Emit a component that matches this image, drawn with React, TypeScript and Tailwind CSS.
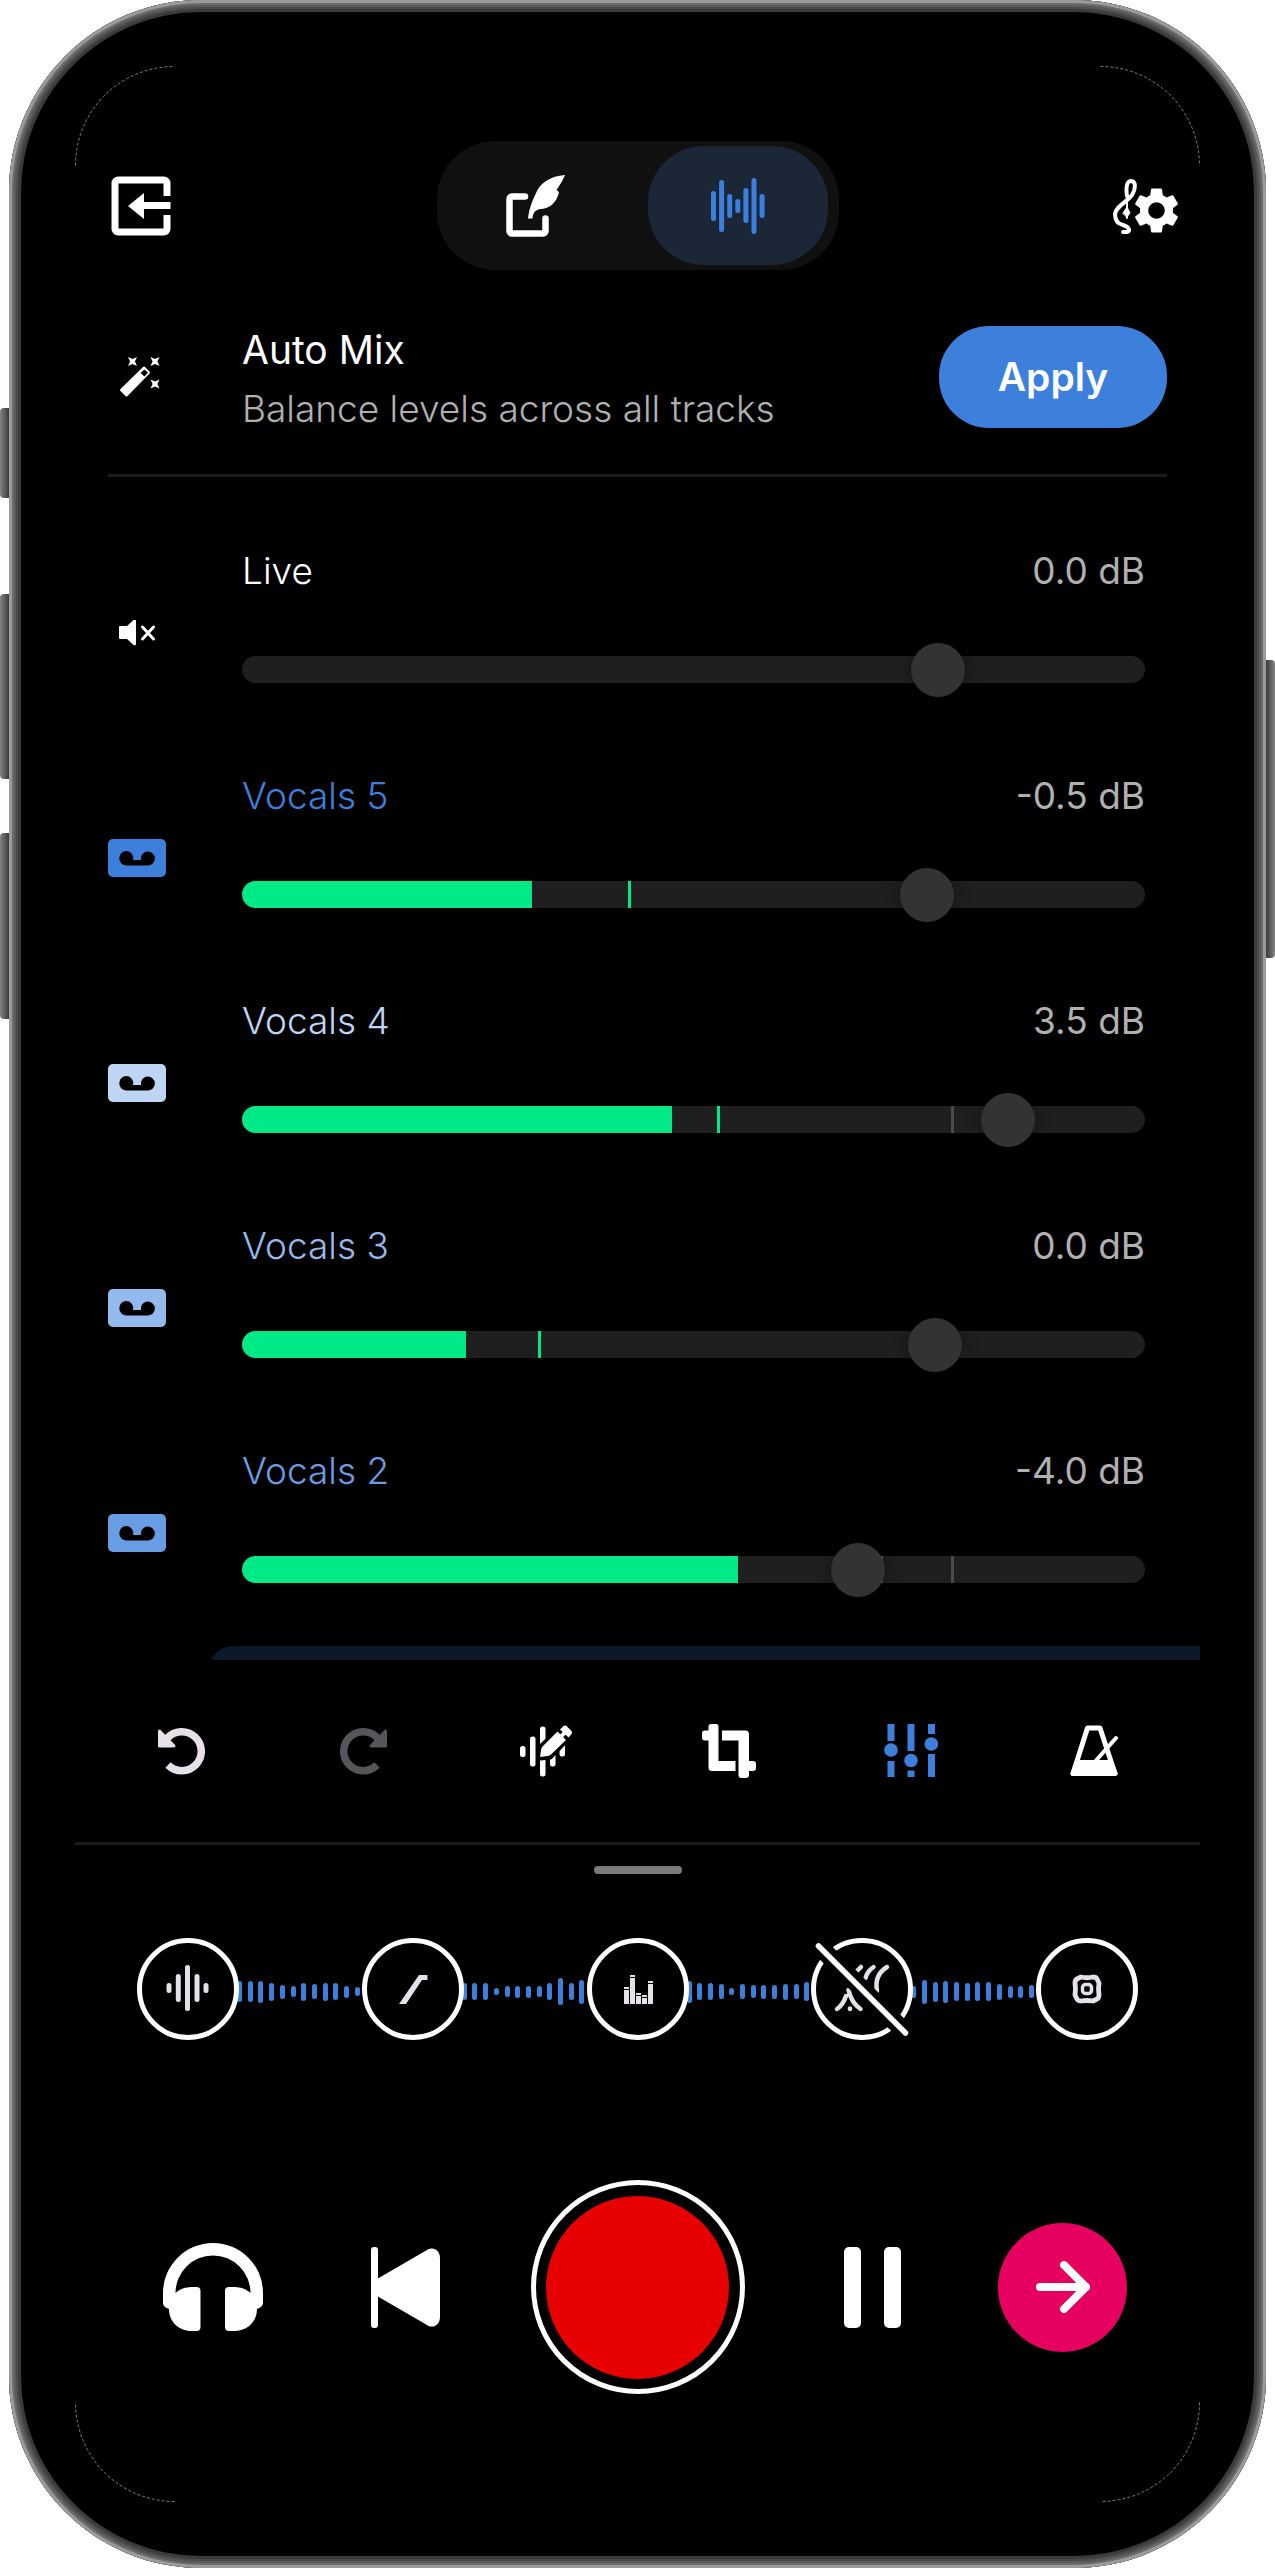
import { useState } from 'react';
import type { ReactNode } from 'react';
import { MdSettings } from 'react-icons/md';

type Track = {
  name: string;
  gain: string;
  position: number;
  color: string;
  level?: number;
  peak?: number;
  peakColor?: string;
  clip?: number;
  muted?: boolean;
};

const tracks: Track[] = [
  { name: 'Live', gain: '0.0 dB', position: 788, color: 'text-white', muted: true },
  { name: 'Vocals 5', gain: '-0.5 dB', position: 775, color: 'text-[#3c80dc]', level: 32.1, peak: 42.8, peakColor: 'bg-[#00e987]' },
  { name: 'Vocals 4', gain: '3.5 dB', position: 870, color: 'text-[#bfd5f4]', level: 47.6, peak: 52.6, peakColor: 'bg-[#00e987]', clip: 78.5 },
  { name: 'Vocals 3', gain: '0.0 dB', position: 784, color: 'text-[#94b9ec]', level: 24.8, peak: 32.8, peakColor: 'bg-[#00e987]' },
  { name: 'Vocals 2', gain: '-4.0 dB', position: 694, color: 'text-[#689de4]', level: 54.9, peak: 70.7, peakColor: 'bg-[#6b6b12]', clip: 78.5 },
];

// Heights of the little bars between two effects
const waves = [
  [21, 21, 22, 18, 14, 11, 18, 15, 18, 17, 12, 9],
  [17, 17, 17, 7, 11, 12, 12, 11, 17, 27, 17, 24],
  [22, 17, 17, 15, 7, 15, 13, 14, 14, 16, 15, 19],
  [12, 24, 20, 22, 19, 18, 19, 19, 16, 12, 12, 13],
];

/* Icons */

function ExitIcon() {
  return (
    <svg width="60" height="60" viewBox="0 0 60 60" fill="none">
      <path d="M56 20V7a3 3 0 0 0-3-3H7a3 3 0 0 0-3 3v46a3 3 0 0 0 3 3h46a3 3 0 0 0 3-3V39" stroke="white" strokeWidth="7" />
      <path d="M17 30 33 17v9h26.500v7H33v10z" fill="white" />
    </svg>
  );
}

function QuillIcon() {
  return (
    <svg width="60" height="62" viewBox="0 0 60 62" fill="none">
      <path d="M19 21.500H6a2.500 2.500 0 0 0-2.500 2.500v32A2.500 2.500 0 0 0 6 58.500h31a2.500 2.500 0 0 0 2.500-2.500V43.500" stroke="white" strokeWidth="6.500" strokeLinecap="round" />
      <path d="M59 0C44 1 35 8 31 16c-5 10-8 18-9 27.500h4.500C27 38 29 35 34 34c10 0 17-7 19-17l-2.500-2C54 10 57 5 59 0z" fill="white" />
    </svg>
  );
}

function WaveIcon() {
  const bars = [[13, 43], [2, 54], [16, 40], [21, 35], [10, 45], [0, 56], [16, 40]];
  return (
    <svg width="54" height="56" viewBox="0 0 54 56" fill="#3c80dc">
      {bars.map(([top, bottom], i) => (
        <rect key={i} x={i * 8.1} y={top} width="5" height={bottom - top} rx="2.500" />
      ))}
    </svg>
  );
}

function ClefIcon() {
  return (
    <svg width="27" height="60" viewBox="0 0 27 60" fill="none" stroke="white" strokeWidth="4" strokeLinecap="round" strokeLinejoin="round">
      <path d="M17 20C16 14 16 5 21 5s5 8 1 14C17 26 6 30 5 38c0 6 3 10 8 11 6 2 8 6 4 7h-4" />
      <path d="M17 22v20" strokeWidth="2" />
      <path d="M13 37l4-6 3 6-3 4z" fill="white" strokeWidth="1" />
    </svg>
  );
}

function WandIcon() {
  return (
    <svg width="40" height="40" viewBox="0 0 40 40" fill="white">
      <path fillRule="evenodd" d="M23 10q1-1 2 0l4.500 4.500q1 1 0 2L7.500 39q-1 1-2 0l-5-5q-1-1 0-2zM24.300 12.500 20.500 16l4 3.500 3.500-4z" />
      {['translate(12.500 4.500)', 'translate(35 4.500)', 'translate(35 27)'].map((t) => (
        <path key={t} transform={t} d="M-4.500-4.500 0-2.400l4.500-2.100L2.400 0l2.100 4.500L0 2.400l-4.500 2.100L-2.400 0z" />
      ))}
    </svg>
  );
}

function MutedIcon() {
  return (
    <svg width="36" height="26" viewBox="0 0 36 26" fill="none">
      <path d="M0 7q0-1 1-1h7l6.500-6q2.500-1 2.500 1v23q0 2-2.500 1L8 19H1q-1 0-1-1z" fill="white" />
      <path d="m23.500 7 11 12m0-12-11 12" stroke="white" strokeWidth="3" strokeLinecap="round" />
    </svg>
  );
}

function TapeIcon() {
  return (
    <svg width="58" height="38" viewBox="0 0 58 38">
      <rect width="58" height="38" rx="5" fill="currentColor" />
      <path d="M18.500 12a7 7 0 0 1 6.500 9h8a7 7 0 1 1 6.500 5.500h-21a7.200 7.200 0 0 1 0-14.500z" fill="black" />
    </svg>
  );
}

function TurnIcon() {
  return (
    <svg width="47" height="48" viewBox="0 0 47 48" fill="none" stroke="currentColor">
      <path d="M9 11.500A19.500 19.500 0 1 1 10 38" strokeWidth="7.500" />
      <path d="M1.500 4 16 19H1.500z" fill="currentColor" strokeWidth="3" strokeLinejoin="round" />
    </svg>
  );
}

function EditWaveIcon() {
  return (
    <svg width="52" height="52" viewBox="0 0 52 52" fill="white">
      <rect x="0" y="21" width="5.500" height="11" rx="2.500" />
      <rect x="10" y="11.500" width="5.500" height="30" rx="2.500" />
      <rect x="20" y="1.500" width="5.500" height="50" rx="2.500" />
      <rect x="30" y="22" width="5.500" height="19.500" rx="2.500" />
      <rect x="39.500" y="13" width="5.500" height="18.500" rx="2.500" />
      <path d="M20.500 32 22 22 44 1l8 7-22 23z" stroke="black" strokeWidth="7" />
      <path d="M21 32q-1 0-.8-1.500l1-6.500q.3-1.500 1.300-2.500L37.500 6.500l8.500 8.500-15 14.500q-1 1-2.500 1.300z" />
      <path d="M40 4.500 43.500 1q1.500-1 3 0l5 5q1 1.500 0 3L48.500 12.500z" />
    </svg>
  );
}

function CropIcon() {
  return (
    <svg width="54" height="54" viewBox="0 0 54 54" fill="white">
      <path d="M9 0h5q2.500 0 2.500 2.500V37h17v10H10q-3.500 0-3.500-3.500v-27H3q-3 0-3-3v-4q0-3 3-3h3.500v-4Q6.500 0 9 0z" />
      <path d="M20 6.500h23.500Q47 6.500 47 10v27h4q3 0 3 3v4q0 3-3 3h-4v4q0 3-3 3h-4.500q-3 0-3-3V16.500H20z" />
    </svg>
  );
}

function MixerIcon() {
  return (
    <svg width="54" height="54" viewBox="0 0 54 54" fill="#3c80dc">
      <path d="M3.500 0h7v17h-7zM3.500 37h7v16h-7zM23.500 0h7v27h-7zM23.500 46.500h7V53h-7zM44 0h7v10h-7zM44 30h7v23h-7z" />
      <circle cx="7" cy="26" r="6.800" />
      <circle cx="27" cy="36.500" r="6.800" />
      <circle cx="47.300" cy="20" r="6.800" />
    </svg>
  );
}

function MetronomeIcon() {
  return (
    <svg width="48" height="52" viewBox="0 0 48 52" fill="none" stroke="white" strokeWidth="5" strokeLinecap="round" strokeLinejoin="round">
      <path d="M17.500 3h12.500l15 45.500H3z" />
      <path d="M7.500 37.500h33L45 48.500H3z" fill="white" />
      <path d="M26 35.500 46 13" strokeWidth="4" />
    </svg>
  );
}

function HeadphonesIcon() {
  return (
    <svg width="100" height="88" viewBox="0 0 100 88" fill="white">
      <path d="M0 50a50 50 0 0 1 100 0v10c0 3-3 5-6 6 0 12-9 22-23 22h-5a4 4 0 0 1-4-4V48a4 4 0 0 1 4-4h4c8 0 13 2 17.500 6a37.500 37.500 0 0 0-75 0C17 46 22 44 30 44h3.500a4 4 0 0 1 4 4v36a4 4 0 0 1-4 4H29C15 88 6 78 6 66c-3-1-6-3-6-6z" />
    </svg>
  );
}

function PreviousIcon() {
  return (
    <svg width="69" height="81" viewBox="0 0 69 81" fill="white">
      <rect width="7" height="81" rx="3" />
      <path d="M6 32 56 3c6-4 13 0 13 8v59c0 8-7 12-13 8L6 49z" />
    </svg>
  );
}

function PauseIcon() {
  return (
    <svg width="57" height="81" viewBox="0 0 57 81" fill="white">
      <rect width="17" height="81" rx="5" />
      <rect x="40" width="17" height="81" rx="5" />
    </svg>
  );
}

function ArrowIcon() {
  return (
    <svg width="54" height="52" viewBox="0 0 54 52" fill="none" stroke="white" strokeWidth="8" strokeLinecap="round" strokeLinejoin="round">
      <path d="M4 26h46M28 4l22 22-22 22" />
    </svg>
  );
}

/* Effect drawings, all on a 102 x 102 canvas with the ring around them */

function Ring() {
  return <circle cx="51" cy="51" r="48.500" fill="black" stroke="white" strokeWidth="5" />;
}

const effects: { name: string; art: ReactNode }[] = [
  {
    name: 'Input',
    art: (
      <>
        <Ring />
        <path d="M32 47.500v5M41.300 38.500v23M50.500 29.500v41M60 38.500v23M69 47.500v5" stroke="#e6e0e9" strokeWidth="5" strokeLinecap="round" />
      </>
    ),
  },
  {
    name: 'Filter',
    art: (
      <>
        <Ring />
        <path d="M37 66 57 37h8.500v5H60L44 66z" fill="#e6e0e9" />
      </>
    ),
  },
  {
    name: 'Equalizer',
    art: (
      <>
        <Ring />
        <path d="M37 49h5v17h-5zM43 37h5v29h-5zM49 55h5v11h-5zM55 57h5v9h-5zM61 43h5v23h-5z" fill="#e6e0e9" />
        <path d="M37 51.500h5M43 39.500h5M49 57.500h5M55 59.500h5M61 45.500h5" stroke="black" />
      </>
    ),
  },
  {
    name: 'Reverb',
    art: (
      <>
        <Ring />
        <g stroke="#e6e0e9" strokeWidth="4.500" strokeLinecap="round">
          <path d="M46 33 50 29M54.500 40q2-7 8-11M66 53q-3-16 10-24M26 71q6-4 9-13M37.500 52q3 13 12 19M39 70.500v.5" />
        </g>
        <path d="m6 6 90 90" stroke="black" strokeWidth="18" />
        <path d="m7.500 8 87 87" stroke="white" strokeWidth="5.500" strokeLinecap="round" />
      </>
    ),
  },
  {
    name: 'Output',
    art: (
      <>
        <Ring />
        <g stroke="#e6e0e9" fill="none" strokeLinejoin="round">
          <path d="M45 39q6 1.500 12 0 3 0 4 2t2 4q-1 6 0 12 0 3-2 4t-4 2q-6-1-12 0-3 0-4-2t-2-4q1-6 0-12 0-3 2-4t4-2z" strokeWidth="4.800" />
          <rect x="46.500" y="46.500" width="9" height="9" rx="3" strokeWidth="3.500" />
        </g>
      </>
    ),
  },
];

function TrackRow({ track }: { track: Track }) {
  const [position, setPosition] = useState(track.position);
  const id = track.name.toLowerCase().replace(' ', '-');

  return (
    <li className="flex h-[225px] pr-[22px]">
      <button type="button" aria-label={`Mute ${track.name}`} className={`flex w-[58px] shrink-0 items-center justify-center ${track.color}`}>
        {track.muted ? <MutedIcon /> : <TapeIcon />}
      </button>
      <div className="ml-[76px] min-w-0 flex-1 pt-[27px]">
        <div className="flex items-center justify-between text-[37px] leading-[48px]">
          <label htmlFor={id} className={`font-light ${track.color}`}>{track.name}</label>
          <output htmlFor={id} className="text-[#b0b0b0]">{track.gain}</output>
        </div>
        <div className="relative mt-[61px] h-[27px]">
          <div className="relative h-full overflow-hidden rounded-full bg-[#1f1f1f]">
            {track.level !== undefined && (
              <div className="h-full bg-[#00e987]" style={{ width: `${track.level}%` }} />
            )}
            {track.peak !== undefined && (
              <div className={`absolute top-0 h-full w-[3px] ${track.peakColor}`} style={{ left: `${track.peak}%` }} />
            )}
            {track.clip !== undefined && (
              <div className="absolute top-0 h-full w-[3px] bg-[#4a4a4a]" style={{ left: `${track.clip}%` }} />
            )}
          </div>
          <input
            id={id}
            type="range"
            min={0}
            max={1000}
            value={position}
            onChange={(e) => setPosition(Number(e.target.value))}
            className="absolute inset-0 h-full w-full cursor-pointer appearance-none bg-transparent [&::-webkit-slider-thumb]:size-[54px] [&::-webkit-slider-thumb]:appearance-none [&::-webkit-slider-thumb]:rounded-full [&::-webkit-slider-thumb]:bg-[#333333] [&::-webkit-slider-thumb]:shadow-[0_0_16px_rgba(0,0,0,0.4)]"
          />
        </div>
      </div>
    </li>
  );
}

function Corner({ className }: { className: string }) {
  return (
    <svg width="100" height="100" viewBox="0 0 100 100" fill="none" className={`pointer-events-none absolute ${className}`}>
      <path d="M.5 99.500A99 99 0 0 1 99.500.5" stroke="#a0a0a0" strokeWidth="0.800" strokeDasharray="3 2" />
    </svg>
  );
}

export default function App() {
  return (
    <div className="relative bg-white px-[9px] font-[Inter,sans-serif]">
      {/* Side buttons */}
      <div className="absolute left-0 top-[408px] h-[90px] w-[9px] rounded-l bg-linear-to-r from-[#858585] to-[#3c3c3c]" />
      <div className="absolute left-0 top-[594px] h-[185px] w-[9px] rounded-l bg-linear-to-r from-[#858585] to-[#3c3c3c]" />
      <div className="absolute left-0 top-[833px] h-[186px] w-[9px] rounded-l bg-linear-to-r from-[#858585] to-[#3c3c3c]" />
      <div className="absolute right-0 top-[660px] h-[298px] w-[9px] rounded-r bg-linear-to-l from-[#858585] to-[#3c3c3c]" />

      <main className="relative rounded-[192px] bg-black px-[66px] pb-[174px] pt-[141px] text-white shadow-[inset_0_0_0_3px_#9b9b9b,inset_0_0_0_5px_#6c6c6c,inset_0_0_0_7px_#5a5a5a,inset_0_0_0_9px_#4b4b4b,inset_0_0_0_12px_#3b3b3b]">
        <Corner className="left-[66px] top-[66px]" />
        <Corner className="right-[66px] top-[66px] rotate-90" />
        <Corner className="bottom-[66px] left-[66px] -rotate-90" />
        <Corner className="bottom-[66px] right-[66px] rotate-180" />

        {/* Top bar */}
        <header className="grid grid-cols-[1fr_auto_1fr] items-center">
          <button type="button" aria-label="Exit" className="ml-[36px] justify-self-start"><ExitIcon /></button>
          <nav className="flex h-[129px] items-center gap-[24px] rounded-[58px] bg-[#101010] px-[11px]">
            <button type="button" aria-label="Lyrics" className="flex h-[119px] w-[176px] items-center justify-center">
              <QuillIcon />
            </button>
            <button type="button" aria-label="Studio" aria-pressed="true" className="flex h-[119px] w-[180px] items-center justify-center rounded-[56px] bg-[#1b2737]">
              <WaveIcon />
            </button>
          </nav>
          <button type="button" aria-label="Settings" className="mr-[16px] flex items-center justify-self-end">
            <ClefIcon />
            <MdSettings className="-ml-[8px] mt-[10px] size-[55px]" />
          </button>
        </header>

        <div className="px-[33px]">
          {/* Auto mix */}
          <section className="flex items-center border-b-3 border-[#1d1d1d] pb-[36px] pt-[46px]">
            <div className="flex w-[64px] shrink-0 justify-center"><WandIcon /></div>
            <div className="ml-[70px] flex-1 pt-[4px] leading-[59px]">
              <h1 className="text-[39px]">Auto Mix</h1>
              <p className="text-[37px] font-light text-[#b0b0b0]">Balance levels across all tracks</p>
            </div>
            <button type="button" className="h-[102px] w-[228px] rounded-[50px] bg-[#3c80dc] text-[39px] font-semibold">
              Apply
            </button>
          </section>

          <ul className="mt-[43px]">
            {tracks.map((track) => (
              <TrackRow key={track.name} track={track} />
            ))}
          </ul>
        </div>

        {/* Top edge of the next, selected track */}
        <div className="ml-[134px] mt-px h-[14px] overflow-hidden">
          <div className="h-[60px] rounded-tl-[24px] bg-[#0c192a]" />
        </div>

        {/* Tools */}
        <div role="toolbar" aria-label="Tools" className="grid h-[182px] grid-cols-6 items-center justify-items-center px-[15px]">
          <button type="button" aria-label="Undo" className="text-[#e6e0e9]"><TurnIcon /></button>
          <button type="button" aria-label="Redo" disabled className="-scale-x-100 text-[#57545a]"><TurnIcon /></button>
          <button type="button" aria-label="Edit audio"><EditWaveIcon /></button>
          <button type="button" aria-label="Crop"><CropIcon /></button>
          <button type="button" aria-label="Mixer" aria-pressed="true"><MixerIcon /></button>
          <button type="button" aria-label="Metronome"><MetronomeIcon /></button>
        </div>

        <div className="flex justify-center border-t-3 border-[#1b1b1b] pt-[21px]">
          <div className="h-[8px] w-[88px] rounded-[4px] bg-[#7b7b7b]" />
        </div>

        {/* Effect chain */}
        <div className="mt-[64px] flex items-center px-[62px]">
          {effects.map((effect, i) => (
            <div key={effect.name} className={i < waves.length ? 'flex flex-1 items-center' : 'flex items-center'}>
              <button type="button" aria-label={effect.name} className="relative z-10 shrink-0">
                <svg width="102" height="102" viewBox="0 0 102 102" fill="none">{effect.art}</svg>
              </button>
              {waves[i] && (
                <div className="-ml-[2px] flex flex-1 items-center justify-between pr-[2px] pt-[5px]">
                  {waves[i].map((height, n) => (
                    <span key={n} className="w-[5px] rounded-full bg-[#3c80dc]" style={{ height }} />
                  ))}
                </div>
              )}
            </div>
          ))}
        </div>

        {/* Transport */}
        <div className="mt-[140px] grid grid-cols-[1fr_auto_1fr] items-center px-[73px]">
          <div className="flex items-center justify-between pl-[15px] pr-[91px]">
            <button type="button" aria-label="Monitor"><HeadphonesIcon /></button>
            <button type="button" aria-label="Back to start"><PreviousIcon /></button>
          </div>
          <button type="button" aria-label="Record" className="flex size-[214px] items-center justify-center rounded-full border-5 border-white">
            <span className="size-[183px] rounded-full bg-[#e60000]" />
          </button>
          <div className="flex items-center justify-between pl-[99px]">
            <button type="button" aria-label="Pause"><PauseIcon /></button>
            <button type="button" aria-label="Next" className="flex size-[129px] items-center justify-center rounded-full bg-[#e6005f]">
              <ArrowIcon />
            </button>
          </div>
        </div>
      </main>
    </div>
  );
}
